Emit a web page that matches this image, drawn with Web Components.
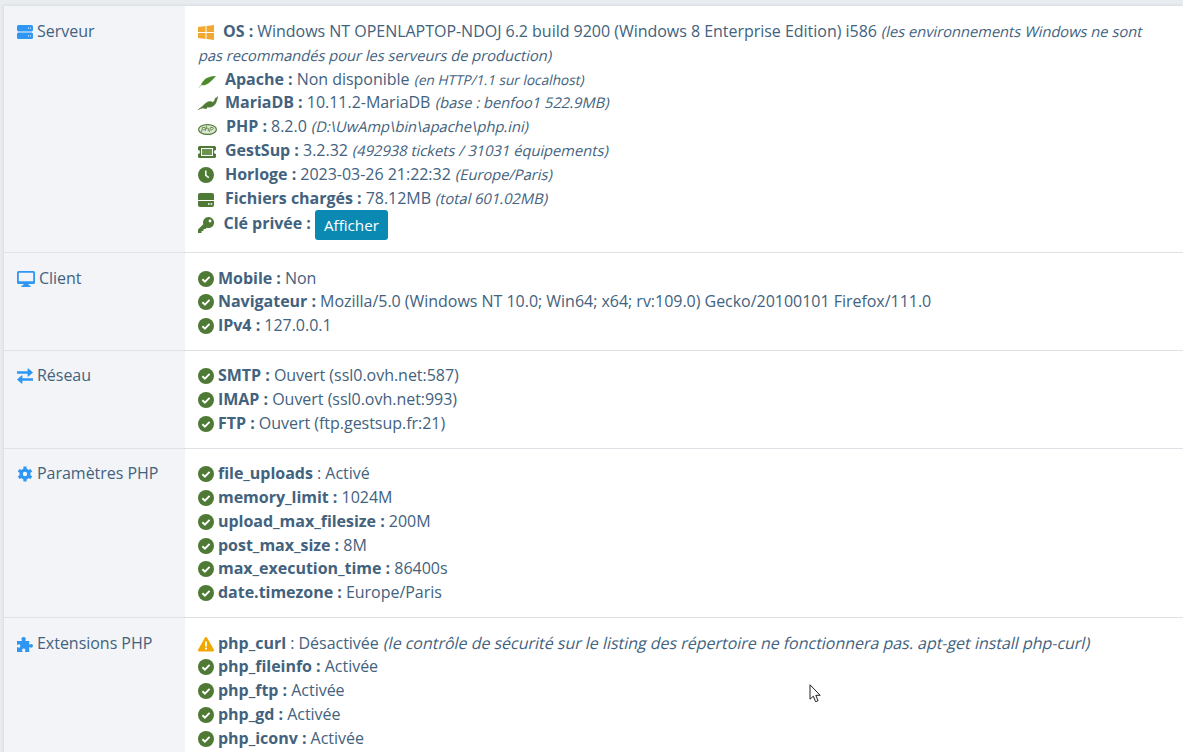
<!DOCTYPE html>
<html lang="fr"><head><meta charset="utf-8"><title>Système</title>
<style>
html,body{margin:0;height:752px;overflow:hidden;background:#e9ecef}
body{font:16px/23.8px "Open Sans",sans-serif;color:#42627e;letter-spacing:-.025px}
</style></head><body>
<info-table>
<info-row label="Serveur" icon="server" pad="14">
 <info-line icon="windows" gap="25"><b>OS :</b> Windows NT OPENLAPTOP-NDOJ 6.2 build 9200 (Windows 8 Enterprise Edition) i586 <slant-text>(les environnements Windows ne sont</slant-text> <slant-text>pas recommandés pour les serveurs de production)</slant-text></info-line>
 <info-line icon="feather" gap="27"><b>Apache :</b> Non disponible <slant-text size="13.7">(en HTTP/1.1 sur localhost)</slant-text></info-line>
 <info-line icon="seal" gap="27"><b>MariaDB :</b> 10.11.2-MariaDB <slant-text>(base : benfoo1 522.9MB)</slant-text></info-line>
 <info-line icon="php" gap="28"><b>PHP :</b> 8.2.0 <slant-text>(D:\UwAmp\bin\apache\php.ini)</slant-text></info-line>
 <info-line icon="ticket" gap="27"><b>GestSup :</b> 3.2.32 <slant-text>(492938 tickets / 31031 équipements)</slant-text></info-line>
 <info-line icon="clock" gap="27"><b>Horloge :</b> 2023-03-26 21:22:32 <slant-text>(Europe/Paris)</slant-text></info-line>
 <info-line icon="hdd" gap="27"><b>Fichiers chargés :</b> 78.12MB <slant-text>(total 601.02MB)</slant-text></info-line>
 <info-line icon="key" gap="25.5"><b>Clé privée :</b> <info-button>Afficher</info-button></info-line>
</info-row>
<info-row label="Client" icon="desktop" pad="13.6">
 <info-line><b>Mobile :</b> Non</info-line>
 <info-line><b>Navigateur :</b> Mozilla/5.0 (Windows NT 10.0; Win64; x64; rv:109.0) Gecko/20100101 Firefox/111.0</info-line>
 <info-line><b>IPv4 :</b> 127.0.0.1</info-line>
</info-row>
<info-row label="Réseau" icon="exchange" pad="13.3">
 <info-line><b>SMTP :</b> Ouvert (ssl0.ovh.net:587)</info-line>
 <info-line><b>IMAP :</b> Ouvert (ssl0.ovh.net:993)</info-line>
 <info-line><b>FTP :</b> Ouvert (ftp.gestsup.fr:21)</info-line>
</info-row>
<info-row label="Paramètres PHP" icon="cog" pad="13.3">
 <info-line><b>file_uploads</b> : Activé</info-line>
 <info-line><b>memory_limit :</b> 1024M</info-line>
 <info-line><b>upload_max_filesize :</b> 200M</info-line>
 <info-line><b>post_max_size :</b> 8M</info-line>
 <info-line><b>max_execution_time :</b> 86400s</info-line>
 <info-line><b>date.timezone :</b> Europe/Paris</info-line>
</info-row>
<info-row label="Extensions PHP" icon="puzzle" pad="13.3">
 <info-line icon="warn"><b>php_curl</b> : Désactivée <slant-text size="16">(le contrôle de sécurité sur le listing des répertoire ne fonctionnera pas. apt-get install php-curl)</slant-text></info-line>
 <info-line><b>php_fileinfo :</b> Activée</info-line>
 <info-line><b>php_ftp :</b> Activée</info-line>
 <info-line><b>php_gd :</b> Activée</info-line>
 <info-line><b>php_iconv :</b> Activée</info-line>
</info-row>
</info-table>
<mouse-pointer></mouse-pointer>
<script>
const G='#4f7a35',B='#2e96f3';
const ICONS={
server:`<svg width="16" height="14" viewBox="0 0 16 14"><rect y="0" width="16" height="6.400" rx="1.600" fill="${B}"/><rect y="7.600" width="16" height="6.400" rx="1.600" fill="${B}"/><path d="M11 3.200h1M13 3.200h1M11 10.800h1M13 10.800h1" stroke="#dbeaf8" stroke-width="1.200"/></svg>`,
desktop:`<svg width="18" height="16" viewBox="0 0 18 16"><path fill="${B}" fill-rule="evenodd" d="M1.600 0h14.800A1.600 1.600 0 0 1 18 1.600v9.800a1.600 1.600 0 0 1-1.600 1.600H11.500l.5 1.600h1.600v1.400H4.400V14.600H6l.5-1.600H1.600A1.600 1.600 0 0 1 0 11.400V1.600A1.600 1.600 0 0 1 1.600 0zM1.800 1.800v8.400h14.400V1.800z"/></svg>`,
exchange:`<svg width="16" height="16" viewBox="0 0 16 16"><path fill="${B}" d="M0 3.300h10.600V.9a.5.500 0 0 1 .85-.35L16 4.500l-4.550 4a.5.500 0 0 1-.85-.35V5.800H0zM16 10.200H5.400V7.800a.5.500 0 0 0-.85-.35L0 11.500l4.550 4a.5.500 0 0 0 .85-.35V12.700H16z"/></svg>`,
cog:`<svg width="16" height="16" viewBox="0 0 16 16"><path fill="${B}" fill-rule="evenodd" d="M8 2.400a5.600 5.600 0 1 1 0 11.200A5.600 5.600 0 0 1 8 2.400zm0 3.400a2.200 2.200 0 1 0 0 4.400 2.200 2.200 0 0 0 0-4.400z"/><path d="M8 .6v2.800M8 12.600v2.800M1.600 4.300l2.400 1.400M12 10.300l2.400 1.400M1.600 11.700l2.400-1.400M12 5.700l2.400-1.400" stroke="${B}" stroke-width="3.200"/></svg>`,
puzzle:`<svg width="16" height="16" viewBox="0 0 17 16" preserveAspectRatio="none"><path fill="${B}" d="M0 5h4.600c1-.1.6-1 .1-1.700C4.200 2.200 5.500 1 7 1s2.800 1.200 2.300 2.300c-.4.700-.8 1.600.2 1.700H13v3c.1 1 1 .6 1.500.2C15.300 7.500 17 8.300 17 9.800s-1.700 2.300-2.500 1.600c-.5-.4-1.400-.8-1.500.2V16H9c-1-.1-.6-1-.2-1.500.5-.9-.2-2-1.600-2s-2.200 1.100-1.700 2c.3.500.8 1.400-.2 1.500H0v-4.300c.1-1 1-.6 1.500-.2C2.500 12 3.500 11.300 3.500 10S2.500 8 1.500 8.500C1 8.900.1 9.300 0 8.300z"/></svg>`,
check:`<svg width="16" height="16" viewBox="0 0 16 16"><circle cx="8" cy="8" r="8" fill="${G}"/><path d="M4.400 8.300l2.500 2.400 4.700-4.800" fill="none" stroke="#fff" stroke-width="1.900"/></svg>`,
warn:`<svg width="16" height="15" viewBox="0 0 16 15"><path fill="#f0a800" d="M8 0c.5 0 .9.300 1.200.8l6.600 11.800c.5.900-.1 2-1.200 2H1.400c-1.100 0-1.700-1.100-1.200-2L6.800.8C7.100.300 7.500 0 8 0z"/><path d="M8 4.400v5" stroke="#fff" stroke-width="1.800"/><circle cx="8" cy="11.600" r="1.100" fill="#fff"/></svg>`,
windows:`<svg width="16" height="15" viewBox="0 0 16 15"><path fill="#f0a830" d="M0 2 7.500 1V7H0zM8.500 .9 16 0v7H8.500zM0 8h7.500v6L0 13zM8.500 8H16v7l-7.500-.9z"/></svg>`,
feather:`<svg width="18" height="12" viewBox="0 0 18 12"><path fill="#4d8a2c" stroke="#4d8a2c" stroke-width=".5" d="M17.500.3C13 .3 8 1.800 5.500 5 4 7 3.500 8 3.300 8.800 6 9.600 9 8.400 11.500 6.200 14 4.200 16 2.300 17.500.3z"/><path d="M3.300 8.800 1 11.500" stroke="#a8bd9a" stroke-width="1"/></svg>`,
seal:`<svg width="20" height="15" viewBox="0 0 20 15"><path fill="${G}" stroke="${G}" stroke-width=".5" d="M19.800.4c-.9 1-1.500 1.500-2.500 1.800-.5 2-1.300 3.500-2.600 4.100-.4-.3-1.500-.9-2.900-.9-3.500.2-5.500 3.300-7.500 5-1.200.9-2.500 1.700-4.300 3.400 2.200-1.200 3.800-1.600 5.300-1.800.8.600 2.200.7 3.500.4 0-.5.500-1.200.8-1.700.8.500 2.300.700 3.200.4 2.200-.8 4.300-2.300 5.200-4.700.7-1.800 1.300-3.500 1.800-6z"/></svg>`,
php:`<svg width="19" height="11" viewBox="0 0 19 11"><ellipse cx="9.500" cy="5.500" rx="8.900" ry="4.900" fill="#dce8d4" stroke="${G}" stroke-width="1.200"/><path d="M3.500 8l1-4.500h2.200c1 0 1 2.500-1.800 2.500M7.300 7l1.200-5M8 4.200h2c.8 0 .5 1 .2 2.800M11.500 8l1-4.500h2.200c1 0 1 2.500-1.800 2.500" fill="none" stroke="${G}" stroke-width=".8"/></svg>`,
ticket:`<svg width="18" height="14" viewBox="0 0 18 14"><path fill="${G}" fill-rule="evenodd" d="M1.500 1h15A1.500 1.500 0 0 1 18 2.500V5a2 2 0 0 0 0 4v2.500a1.500 1.500 0 0 1-1.500 1.500h-15A1.500 1.500 0 0 1 0 11.500V9a2 2 0 0 0 0-4V2.500A1.500 1.500 0 0 1 1.500 1zM3 3v8h12V3z"/><rect x="4" y="4" width="10" height="6" fill="#6d9252"/></svg>`,
clock:`<svg width="16" height="16" viewBox="0 0 16 16"><circle cx="8" cy="8" r="8" fill="${G}"/><path d="M7.800 3.400v5l3 2.200" fill="none" stroke="#fff" stroke-width="1.500"/></svg>`,
hdd:`<svg width="16" height="14" viewBox="0 0 16 14"><path fill="${G}" d="M2 0h12a2 2 0 0 1 2 2v5H0V2a2 2 0 0 1 2-2zM0 8h16v4a2 2 0 0 1-2 2H2a2 2 0 0 1-2-2z"/><path d="M10 11h1.600M12.600 11h1.600" stroke="#fff" stroke-width="1.500"/></svg>`,
key:`<svg width="16" height="16" viewBox="0 0 16 16"><path fill="${G}" fill-rule="evenodd" d="M10.500 0a5.500 5.500 0 1 1-1.700 10.700L7.500 12H5.500v2h-2v2H0v-3.500l5.300-5.300A5.500 5.500 0 0 1 10.500 0zm1.500 2.600a1.400 1.400 0 1 0 0 2.800 1.400 1.400 0 0 0 0-2.800z"/></svg>`
};
function def(name,html){customElements.define(name,class extends HTMLElement{connectedCallback(){if(this.shadowRoot)return;const r=this.attachShadow({mode:'open'});r.innerHTML=html(this)}})}
def('info-table',()=>`<style>:host{display:block;margin:6px 0 0 4px;background:#fff;box-shadow:0 0 3px rgba(120,130,140,.25)}</style><slot></slot>`);
def('info-row',h=>{const p=parseFloat(h.getAttribute('pad'));return `<style>
:host{display:grid;grid-template-columns:181px 1fr;border-bottom:1px solid #dee2e6}
.l{background:#f2f4f7;padding:${p}px 0 0 13px;display:flex;align-items:flex-start;gap:4px}
.l .ic{height:24px;display:flex;align-items:center}
.r{padding:${p}px 13px ${25.6-p}px}
</style><div class="l"><span class="ic">${ICONS[h.getAttribute('icon')]}</span><span>${h.getAttribute('label')}</span></div><div class="r"><slot></slot></div>`});
def('info-line',h=>{const ic=h.getAttribute('icon')||'check';return `<style>
:host{display:block}
.i{display:inline-flex;align-items:center;height:16px;vertical-align:-3px;width:${h.getAttribute('gap')||20}px}
</style><span class="i">${ICONS[ic]}</span><slot></slot>`});
def('slant-text',h=>`<style>:host{display:inline-block;white-space:nowrap;font-size:${h.getAttribute('size')||14.72}px;transform:skewX(-13deg);transform-origin:0 70%}</style><slot></slot>`);
def('info-button',()=>`<style>:host{display:inline-block;background:#0a8ab3;color:#fff;border-radius:3px;padding:0 9px;font-size:15.200px;height:30px;line-height:30px;vertical-align:middle}</style><slot></slot>`);
def('mouse-pointer',()=>`<style>:host{position:absolute;left:809px;top:684px;width:14px;height:20px;display:block}</style><svg width="14" height="20" viewBox="0 0 14 20"><path d="M1 .8v14.400l3.300-3 2.300 5.500 2.500-1-2.300-5.400h4.400z" fill="#fff" stroke="#222" stroke-width="1"/></svg>`);
</script>
</body></html>
